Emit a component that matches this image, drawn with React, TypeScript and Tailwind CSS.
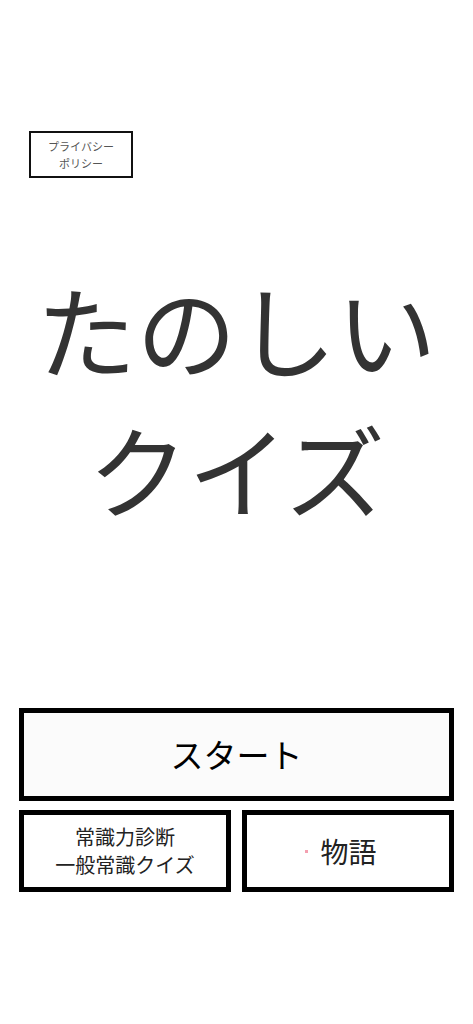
import React from 'react';

const jp = { fontFamily: '"Noto Sans CJK JP", "Noto Sans", sans-serif' };

export default function App() {
  return (
    <div className="min-h-[1024px] w-full bg-white" style={jp}>
      <div className="px-[29px] pt-[131px]">
        <button className="flex h-[47px] w-[104px] flex-col items-center justify-center border-2 border-[#111] bg-white text-[11px] leading-[17px] text-[#555]">
          <span>プライバシー</span>
          <span>ポリシー</span>
        </button>
      </div>

      <h1 className="mt-[80px] text-center text-[100px] font-normal leading-[140px] text-[#333]">
        <div>たのしい</div>
        <div>クイズ</div>
      </h1>

      <div className="mt-[170px] px-[19px]">
        <button className="flex h-[93px] w-full items-center justify-center border-[5px] border-black bg-[#fbfbfb] text-[33px] text-black">
          スタート
        </button>
        <div className="mt-[9px] grid grid-cols-2 gap-[11px]">
          <button className="flex h-[82px] flex-col items-center justify-center border-[5px] border-black bg-white text-[20px] leading-[28px] text-[#222]">
            <span>常識力診断</span>
            <span>一般常識クイズ</span>
          </button>
          <button className="flex h-[82px] items-center justify-center border-[5px] border-black bg-white text-[28px] text-[#222]">
            <span className="mr-[12px] inline-block h-[3px] w-[3px] bg-[#f4a0b0]" />
            <span className="mr-[14px]">物語</span>
          </button>
        </div>
      </div>
    </div>
  );
}
